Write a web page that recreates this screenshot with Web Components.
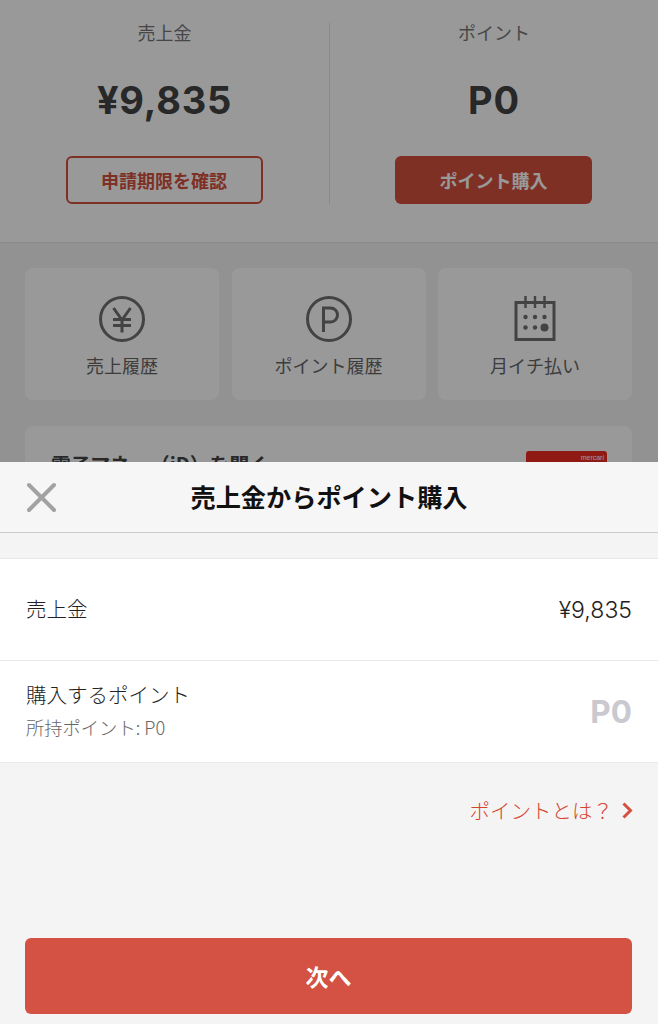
<!DOCTYPE html>
<html lang="ja">
<head>
<meta charset="utf-8">
<title>売上金からポイント購入</title>
<style>
    html, body {
        margin: 0;
        padding: 0;
        background: #f4f4f4;
    }
    body {
        font-family: "Noto Sans CJK JP", "Noto Sans", sans-serif;
        color: #333;
    }
</style>
</head>
<body>
<sales-page>
    <balance-panel slot="top"></balance-panel>
    <menu-tile slot="tiles" label="売上履歴" icon="yen"></menu-tile>
    <menu-tile slot="tiles" label="ポイント履歴" icon="point"></menu-tile>
    <menu-tile slot="tiles" label="月イチ払い" icon="calendar"></menu-tile>
    <id-card slot="bottom"></id-card>
    <purchase-sheet slot="sheet">
        <info-row label="売上金" value="¥9,835"></info-row>
        <info-row label="購入するポイント" sub="所持ポイント: P0" value="P0" muted></info-row>
    </purchase-sheet>
</sales-page>

<script>
class SalesPage extends HTMLElement {
    constructor() {
        super();
        this.attachShadow({ mode: 'open' });
        this.shadowRoot.innerHTML = `
            <style>
                :host {
                    display: block;
                    position: relative;
                    width: 658px;
                    height: 1024px;
                    overflow: hidden;
                    background: #f4f4f4;
                }
                .tiles {
                    display: grid;
                    grid-template-columns: 194px 194px 194px;
                    gap: 12.5px;
                    padding: 25px 25px 26px;
                }
                .bottom {
                    padding: 0 26px 0 25px;
                }
                .dim {
                    position: absolute;
                    inset: 0;
                    background: rgba(0, 0, 0, 0.4);
                }
                .sheet {
                    position: absolute;
                    left: 0;
                    right: 0;
                    top: 462px;
                    bottom: 0;
                }
            </style>
            <slot name="top"></slot>
            <div class="tiles"><slot name="tiles"></slot></div>
            <div class="bottom"><slot name="bottom"></slot></div>
            <div class="dim"></div>
            <div class="sheet"><slot name="sheet"></slot></div>
        `;
    }
}

class BalancePanel extends HTMLElement {
    constructor() {
        super();
        this.attachShadow({ mode: 'open' });
        this.shadowRoot.innerHTML = `
            <style>
                :host {
                    display: block;
                    height: 243px;
                    box-sizing: border-box;
                    background: #fff;
                    border-bottom: 1px solid #e6e6e6;
                    padding-top: 23px;
                }
                .wrap {
                    display: grid;
                    grid-template-columns: 329px 1px 328px;
                }
                .line {
                    background: #e4e4e4;
                    height: 181px;
                }
                .col {
                    display: flex;
                    flex-direction: column;
                    align-items: center;
                }
                .label {
                    font-size: 18px;
                    line-height: 18px;
                    color: #777;
                    font-weight: 400;
                }
                .amount {
                    margin-top: 35px;
                    height: 48px;
                    line-height: 48px;
                    font-family: "Inter", "Liberation Sans", sans-serif;
                    font-size: 38px;
                    font-weight: 700;
                    color: #444;
                    letter-spacing: 0.8px;
                }
                button {
                    margin: 32px 1px 0 0;
                    width: 197px;
                    height: 48px;
                    box-sizing: border-box;
                    border-radius: 6px;
                    font-family: inherit;
                    font-size: 18px;
                    font-weight: 700;
                    padding: 0;
                }
                .outline {
                    background: #fff;
                    border: 2px solid #d2513f;
                    color: #d2513f;
                }
                .fill {
                    background: #d2513f;
                    border: 0;
                    color: #fff;
                }
            </style>
            <div class="wrap">
                <div class="col">
                    <div class="label">売上金</div>
                    <div class="amount">¥9,835</div>
                    <button class="outline">申請期限を確認</button>
                </div>
                <div class="line"></div>
                <div class="col">
                    <div class="label">ポイント</div>
                    <div class="amount">P0</div>
                    <button class="fill">ポイント購入</button>
                </div>
            </div>
        `;
    }
}

const TILE_ICONS = {
    yen: `<circle cx="24" cy="24" r="21.5"/>
          <path d="M15.5 13 24 25l8.500-12M24 25v12.500M15 24.500h18M15 30.500h18"/>`,
    point: `<circle cx="24" cy="24" r="21.5"/>
            <path d="M18.500 37V13h7a7 7 0 0 1 0 14h-7"/>`,
    calendar: `<path d="M5 7.500h38v37H5z"/>
               <path d="M14.500 1v12M24 1v12M33.500 1v12" stroke-width="2.400"/>
               <g fill="#707070" stroke="none">
                   <circle cx="14.500" cy="22" r="2.200"/><circle cx="24" cy="22" r="2.200"/><circle cx="33.500" cy="22" r="2.200"/>
                   <circle cx="14.500" cy="32.500" r="2.200"/><circle cx="24" cy="32.500" r="2.200"/><circle cx="33.500" cy="32.500" r="4"/>
               </g>`
};

class MenuTile extends HTMLElement {
    constructor() {
        super();
        this.attachShadow({ mode: 'open' });
        const icon = TILE_ICONS[this.getAttribute('icon')];
        this.shadowRoot.innerHTML = `
            <style>
                :host {
                    display: flex;
                    flex-direction: column;
                    align-items: center;
                    height: 132px;
                    box-sizing: border-box;
                    padding-top: 27px;
                    background: #fff;
                    border-radius: 8px;
                }
                svg {
                    width: 48px;
                    height: 48px;
                    fill: none;
                    stroke: #707070;
                    stroke-width: 3;
                }
                .label {
                    margin-top: 9px;
                    font-size: 18px;
                    line-height: 26px;
                    color: #666;
                }
            </style>
            <svg viewBox="0 0 48 48">${icon}</svg>
            <div class="label">${this.getAttribute('label')}</div>
        `;
    }
}

class IdCard extends HTMLElement {
    constructor() {
        super();
        this.attachShadow({ mode: 'open' });
        this.shadowRoot.innerHTML = `
            <style>
                :host {
                    display: flex;
                    justify-content: space-between;
                    height: 120px;
                    box-sizing: border-box;
                    padding: 25px 25px 0 26px;
                    background: #fff;
                    border-radius: 8px;
                }
                .title {
                    font-size: 19.8px;
                    line-height: 26px;
                    font-weight: 700;
                    color: #444;
                }
                .card {
                    position: relative;
                    width: 81px;
                    height: 52px;
                    background: #ee2a20;
                    border-radius: 3px;
                }
                .brand {
                    position: absolute;
                    top: 2px;
                    right: 3px;
                    font-family: "Liberation Sans", sans-serif;
                    font-size: 7px;
                    line-height: 9px;
                    color: #fff;
                }
            </style>
            <div class="title">電子マネー（iD）を開く</div>
            <div class="card"><span class="brand">mercari</span></div>
        `;
    }
}

class InfoRow extends HTMLElement {
    constructor() {
        super();
        this.attachShadow({ mode: 'open' });
        const sub = this.getAttribute('sub');
        const muted = this.hasAttribute('muted');
        this.shadowRoot.innerHTML = `
            <style>
                :host {
                    display: flex;
                    align-items: center;
                    justify-content: space-between;
                    height: 101px;
                    padding: 0 26px;
                    background: #fff;
                    border-bottom: 1px solid #e8e8e8;
                }
                .text {
                    margin-top: -3px;
                }
                .label {
                    font-size: 20.5px;
                    line-height: 26px;
                    font-weight: 300;
                    color: #222;
                }
                .sub {
                    margin-top: 8px;
                    font-size: 18.3px;
                    line-height: 24px;
                    font-weight: 300;
                    color: #666;
                }
                .value {
                    font-family: "Inter", "Liberation Sans", sans-serif;
                    font-size: 23px;
                    font-weight: 300;
                    color: #222;
                }
                .value.muted {
                    font-size: 31.5px;
                    font-weight: 700;
                    color: #c9c9cf;
                }
            </style>
            <div class="text">
                <div class="label">${this.getAttribute('label')}</div>
                ${sub ? `<div class="sub">${sub}</div>` : ''}
            </div>
            <div class="value ${muted ? 'muted' : ''}">${this.getAttribute('value')}</div>
        `;
    }
}

class PurchaseSheet extends HTMLElement {
    constructor() {
        super();
        this.attachShadow({ mode: 'open' });
        this.shadowRoot.innerHTML = `
            <style>
                :host {
                    display: flex;
                    flex-direction: column;
                    height: 100%;
                    background: #f4f4f4;
                }
                header {
                    position: relative;
                    display: flex;
                    align-items: center;
                    justify-content: center;
                    height: 70px;
                    background: #f6f6f6;
                    border-bottom: 1px solid #cdcdcd;
                    flex: none;
                }
                h1 {
                    margin: 0 0 2px;
                    font-size: 25.2px;
                    line-height: 30px;
                    font-weight: 700;
                    color: #111;
                }
                .close {
                    position: absolute;
                    left: 26px;
                    top: 20px;
                    width: 31px;
                    height: 31px;
                    fill: none;
                    stroke: #a2a2a2;
                    stroke-width: 4;
                    stroke-linecap: round;
                }
                .rows {
                    margin-top: 25px;
                    border-top: 1px solid #e8e8e8;
                }
                .link {
                    display: flex;
                    align-items: center;
                    justify-content: flex-end;
                    gap: 9px;
                    margin-top: 33px;
                    padding-right: 25px;
                    font-size: 20.5px;
                    line-height: 28px;
                    font-weight: 300;
                    color: #d4442f;
                }
                .link svg {
                    width: 11px;
                    height: 17px;
                    fill: none;
                    stroke: #d2513f;
                    stroke-width: 3;
                }
                .next {
                    display: block;
                    margin: auto 26px 10px 25px;
                    height: 76px;
                    border: 0;
                    border-radius: 6px;
                    background: #d35243;
                    color: #fff;
                    font-family: inherit;
                    font-size: 23px;
                    font-weight: 700;
                }
            </style>
            <header>
                <svg class="close" viewBox="0 0 31 31"><path d="M3 3l25 25M28 3 3 28"/></svg>
                <h1>売上金からポイント購入</h1>
            </header>
            <div class="rows"><slot></slot></div>
            <div class="link">ポイントとは？<svg viewBox="0 0 11 17"><path d="M1.500 1.500 8.500 8.500l-7 7"/></svg></div>
            <button class="next">次へ</button>
        `;
    }
}

customElements.define('sales-page', SalesPage);
customElements.define('balance-panel', BalancePanel);
customElements.define('menu-tile', MenuTile);
customElements.define('id-card', IdCard);
customElements.define('info-row', InfoRow);
customElements.define('purchase-sheet', PurchaseSheet);
</script>
</body>
</html>
